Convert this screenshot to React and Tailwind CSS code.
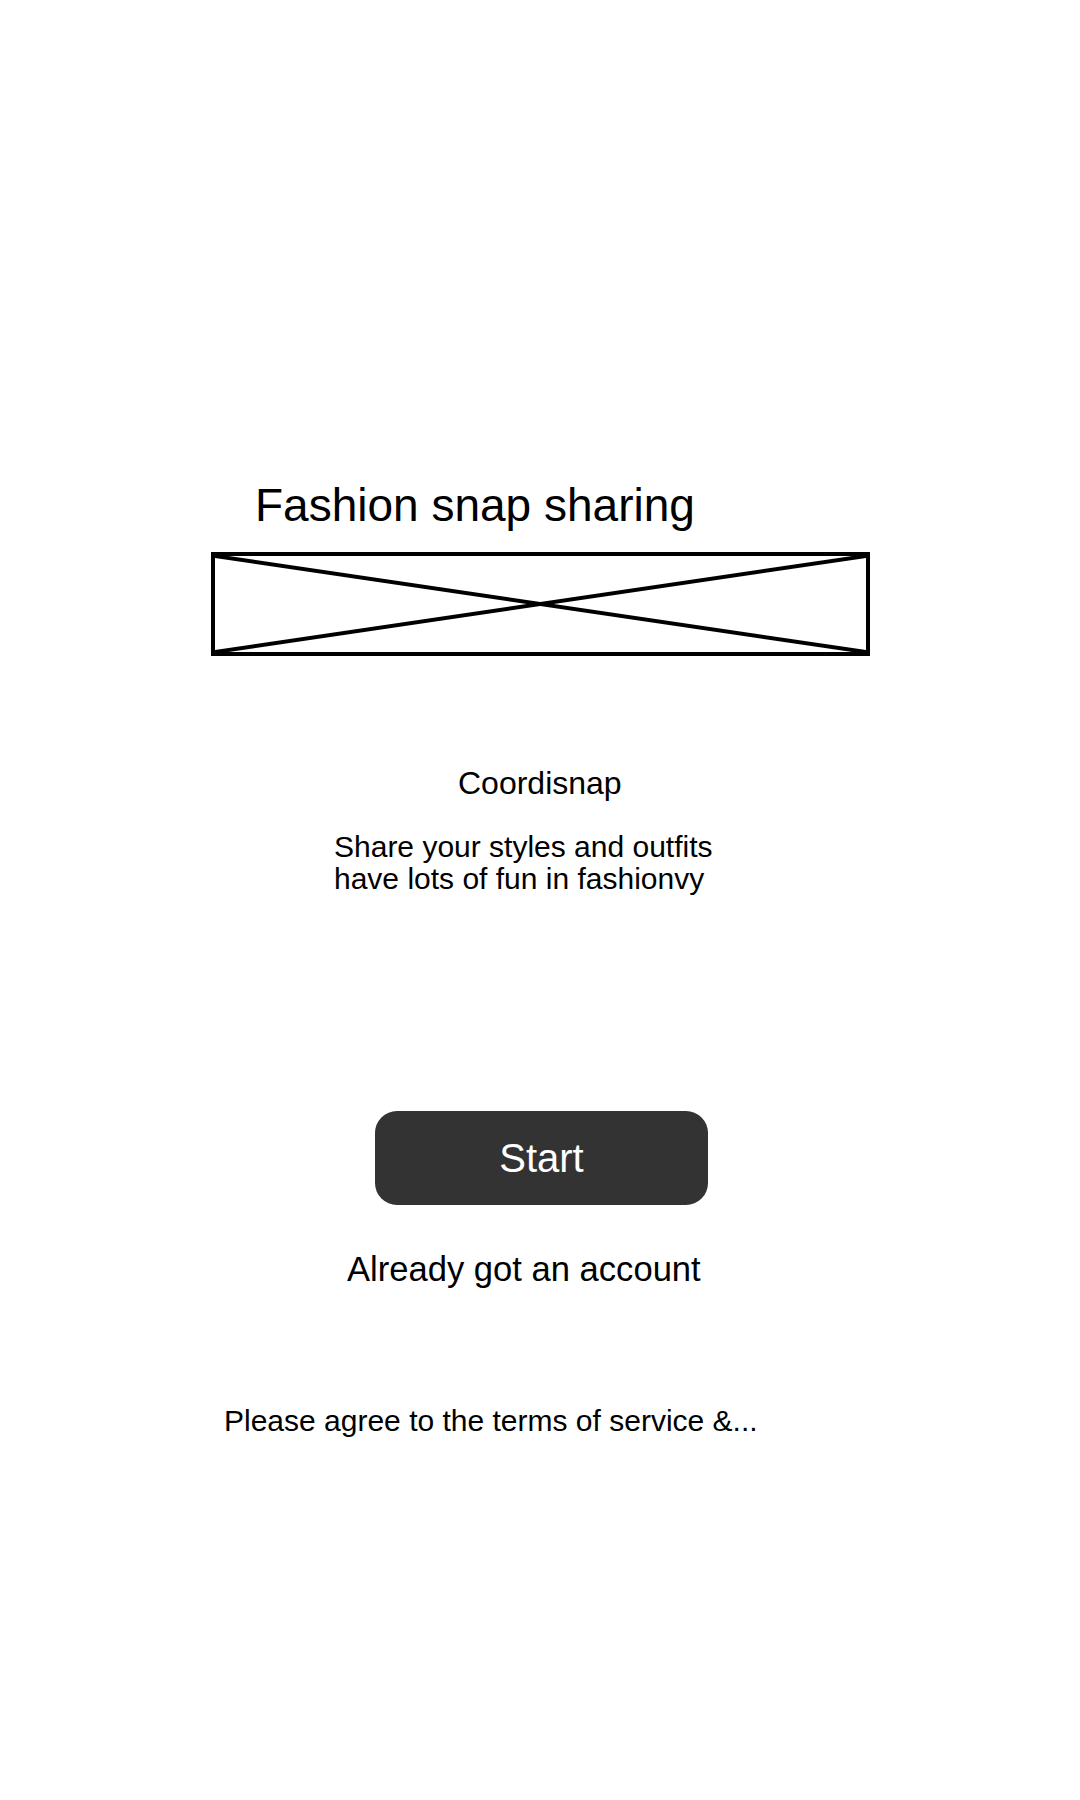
export default function App() {
  return (
    <div
      className="flex min-h-[1800px] w-[1080px] flex-col items-start bg-white pt-[479px] text-black"
      style={{ fontFamily: '"Liberation Sans", Arial, sans-serif' }}
    >
      <h1 className="ml-[255px] text-[46px] font-normal leading-[52px]">Fashion snap sharing</h1>

      {/* image placeholder */}
      <div className="ml-[211px] mt-[21px] h-[104px] w-[659px] border-[4px] border-black">
        <svg className="h-full w-full" viewBox="0 0 100 100" preserveAspectRatio="none">
          <line x1="0" y1="0" x2="100" y2="100" stroke="black" strokeWidth="4" vectorEffect="non-scaling-stroke" />
          <line x1="100" y1="0" x2="0" y2="100" stroke="black" strokeWidth="4" vectorEffect="non-scaling-stroke" />
        </svg>
      </div>

      <p className="ml-[458px] mt-[107px] text-[32px] leading-[40px]">Coordisnap</p>

      <p className="ml-[334px] mt-[28px] text-[30px] leading-[32px]">
        Share your styles and outfits
        <br />
        have lots of fun in fashionvy
      </p>

      <button
        type="button"
        className="ml-[375px] mt-[216px] flex h-[94px] w-[333px] items-center justify-center rounded-[22px] bg-[#333333] text-[40px] leading-[40px] text-white"
      >
        Start
      </button>

      <p className="ml-[347px] mt-[44px] text-[34.6px] leading-[40px]">Already got an account</p>

      <p className="ml-[224px] mt-[114px] text-[30px] leading-[36px]">Please agree to the terms of service &amp;...</p>
    </div>
  );
}
